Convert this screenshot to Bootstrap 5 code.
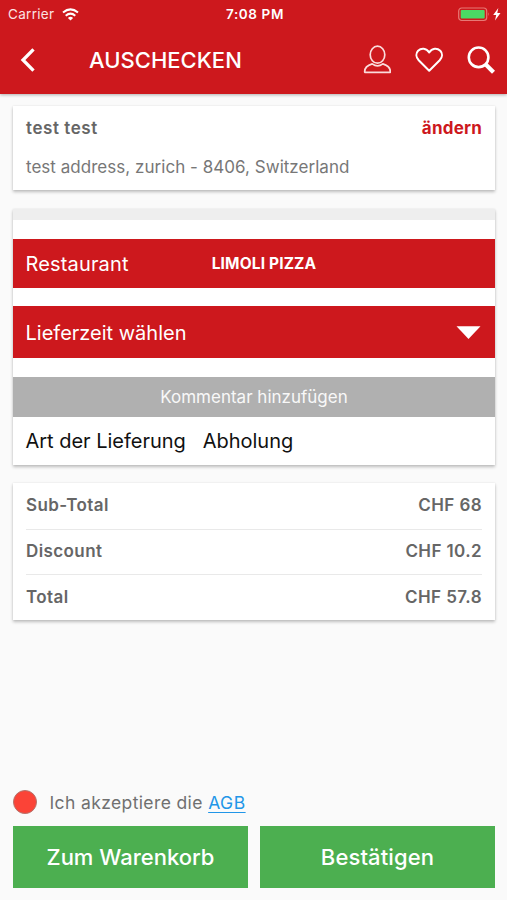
<!DOCTYPE html>
<html lang="de">
<head>
<meta charset="utf-8">
<meta name="viewport" content="width=device-width, initial-scale=1">
<title>Auschecken</title>
<link href="https://cdn.jsdelivr.net/npm/bootstrap@5.3.0/dist/css/bootstrap.min.css" rel="stylesheet">
<style>
body{font-family:Inter,"Liberation Sans",sans-serif;background:#fafafa;color:#666;font-size:17px;line-height:1.2}
.screen{height:900px}
.content{padding:12px 12px 12px 13px}
.brand-bg{background:#cd181d;color:#fff}
.topbar{height:94px;box-shadow:0 1px 3px rgba(0,0,0,.3)}
.status{height:27px;font-size:13.5px;color:#fbe3e3;padding:1px 5px 0 8px}
.carrier{letter-spacing:.3px}
.status-side{flex:1 1 0}
.clock{font-weight:600;font-size:13.5px;letter-spacing:.6px;color:#fff}
.titlebar{height:66px;padding:0 12px 0 20px}
.page-title{font-size:22px;font-weight:500;margin:0 0 0 53px;letter-spacing:.02px}
.panel{background:#fff;box-shadow:0 2px 3px rgba(0,0,0,.24),0 0 2px rgba(0,0,0,.08)}
.address{height:84px;padding:12px 13px 0}
.name-line{font-size:17px;font-weight:600;letter-spacing:.55px}
.change{color:#cd181d;font-weight:700;text-decoration:none;letter-spacing:.2px}
.street{font-size:17px;color:#777;margin-top:19px;letter-spacing:.03px}
.order{margin-top:19px}
.strip{height:11px;background:#eee}
.row-lg{font-size:20px;padding:0 13px 0 12.5px}
.restaurant{height:49px;margin-top:19px;letter-spacing:.15px}
.restaurant-name{font-size:15.5px;font-weight:700;margin-left:83px;padding-top:2px}
.time{height:52px;margin-top:18px}
.time span{padding-top:2px}
.comment{height:40px;margin-top:19px;background:#b0b0b0;color:#f8f8f8;font-size:17px}
.delivery{height:48px;color:#111;gap:17px}
.delivery span{letter-spacing:-.02px}
.totals{margin-top:18px;padding:0 13px;font-weight:600}
.total-line{height:45.6px;padding-bottom:1px;letter-spacing:.4px}
.total-line+.total-line{border-top:1px solid #e9e9e9}
.dot{width:24px;height:24px;background:#fb4337;border:1px solid #b4746d}
.terms{font-size:17.5px;color:#707070;gap:12.500px;letter-spacing:.38px}
.terms a{color:#2196e8;text-underline-offset:3px;letter-spacing:.5px}
.actions{gap:12px;margin-top:12px}
.action{height:62px;background:#4caf50;color:#fff;border:0;border-radius:0;font-size:22px;font-weight:500}
.confirm{letter-spacing:.12px}
</style>
</head>
<body>
<main class="screen d-flex flex-column">
  <header class="topbar brand-bg flex-shrink-0">
    <div class="status d-flex align-items-center">
      <div class="status-side d-flex align-items-center gap-2"><span class="carrier">Carrier</span>
        <svg width="17" height="13" viewBox="0 0 17 13" fill="none" stroke="#fff" stroke-width="2"><path d="M1 4.6Q8.500-1.800 16 4.600M3.700 7.700Q8.500 3.600 13.300 7.700"/><path d="M5.900 9.900Q8.500 7.600 11.100 9.900L8.500 12.500Z" fill="#fff" stroke="none"/></svg>
      </div>
      <span class="clock">7:08 PM</span>
      <div class="status-side d-flex align-items-center justify-content-end">
        <svg width="44" height="15" viewBox="0 0 44 15"><rect x=".7" y="1" width="28" height="12.500" rx="3" fill="none" stroke="#e77975" stroke-width="1.200"/><rect x="2.700" y="3" width="24" height="8.500" rx="1" fill="#4bd964"/><path d="M30.300 5.200Q32 7.200 30.300 9.200Z" fill="#e77975"/><path d="M40.300 1 35.200 8h3l-1.200 5.500 5.500-7.500h-3.200z" fill="#fff"/></svg>
      </div>
    </div>
    <div class="titlebar d-flex align-items-center">
      <svg width="16" height="24" viewBox="0 0 16 24" fill="none" stroke="#fff" stroke-width="3.300"><path d="M13.500 1.300 3 12l10.500 10.700"/></svg>
      <h1 class="page-title">AUSCHECKEN</h1>
      <div class="d-flex align-items-center ms-auto">
        <svg width="28" height="30" viewBox="-1 0 28 30" fill="none" stroke="#fbdcdc" stroke-width="1.700"><ellipse cx="13.500" cy="9.700" rx="7.300" ry="8.500"/><path d="M.7 27.300C.3 22.500 3.500 20.300 8.200 18.900 11.500 21.400 15.500 21.400 18.800 18.900 23.500 20.300 26.700 22.500 26.300 27.300Z" stroke-linejoin="round"/></svg>
        <svg class="ms-4" width="28" height="26" viewBox="-.7 .5 28 26" fill="none" stroke="#fff" stroke-width="2" stroke-linejoin="round"><path d="M13.500 24.300 3 13.800C.2 10.800 0 6.800 2.400 4.200 5.500 1.300 10.500 1.300 13.500 6 16.500 1.300 21.500 1.300 24.600 4.200 27 6.800 26.800 10.800 24 13.800Z"/></svg>
        <svg class="ms-4" width="28" height="28" viewBox="-.3 0 28 28" fill="none" stroke="#fff"><circle cx="11.300" cy="11.300" r="9.800" stroke-width="2.600"/><path d="m18.500 18.500 7.700 7.700" stroke-width="4.200"/></svg>
      </div>
    </div>
  </header>

  <div class="content d-flex flex-column flex-grow-1">
    <section class="panel address">
      <div class="name-line d-flex justify-content-between"><span>test test</span><a class="change" href="#">ändern</a></div>
      <div class="street">test address, zurich - 8406, Switzerland</div>
    </section>

    <section class="panel order">
      <div class="strip"></div>
      <div class="row-lg restaurant brand-bg d-flex align-items-center"><span>Restaurant</span><span class="restaurant-name">LIMOLI PIZZA</span></div>
      <div class="row-lg time brand-bg d-flex align-items-center justify-content-between"><span>Lieferzeit wählen</span>
        <svg width="26" height="16" viewBox="0 0 26 16"><path d="M.5 2.300h24L12.500 15Z" fill="#fff"/></svg>
      </div>
      <div class="comment d-flex align-items-center justify-content-center">Kommentar hinzufügen</div>
      <div class="row-lg delivery d-flex align-items-center"><span>Art der Lieferung</span><span>Abholung</span></div>
    </section>

    <section class="panel totals">
      <div class="total-line d-flex align-items-center justify-content-between"><span>Sub-Total</span><span>CHF 68</span></div>
      <div class="total-line d-flex align-items-center justify-content-between"><span>Discount</span><span>CHF 10.2</span></div>
      <div class="total-line d-flex align-items-center justify-content-between"><span>Total</span><span>CHF 57.8</span></div>
    </section>

    <footer class="mt-auto">
      <div class="terms d-flex align-items-center"><span class="dot rounded-circle"></span><span>Ich akzeptiere die <a href="#">AGB</a></span></div>
      <div class="actions d-flex">
        <button class="action btn flex-fill w-50">Zum Warenkorb</button>
        <button class="action confirm btn flex-fill w-50">Bestätigen</button>
      </div>
    </footer>
  </div>
</main>
<script src="https://cdn.jsdelivr.net/npm/bootstrap@5.3.0/dist/js/bootstrap.bundle.min.js"></script>
</body>
</html>
